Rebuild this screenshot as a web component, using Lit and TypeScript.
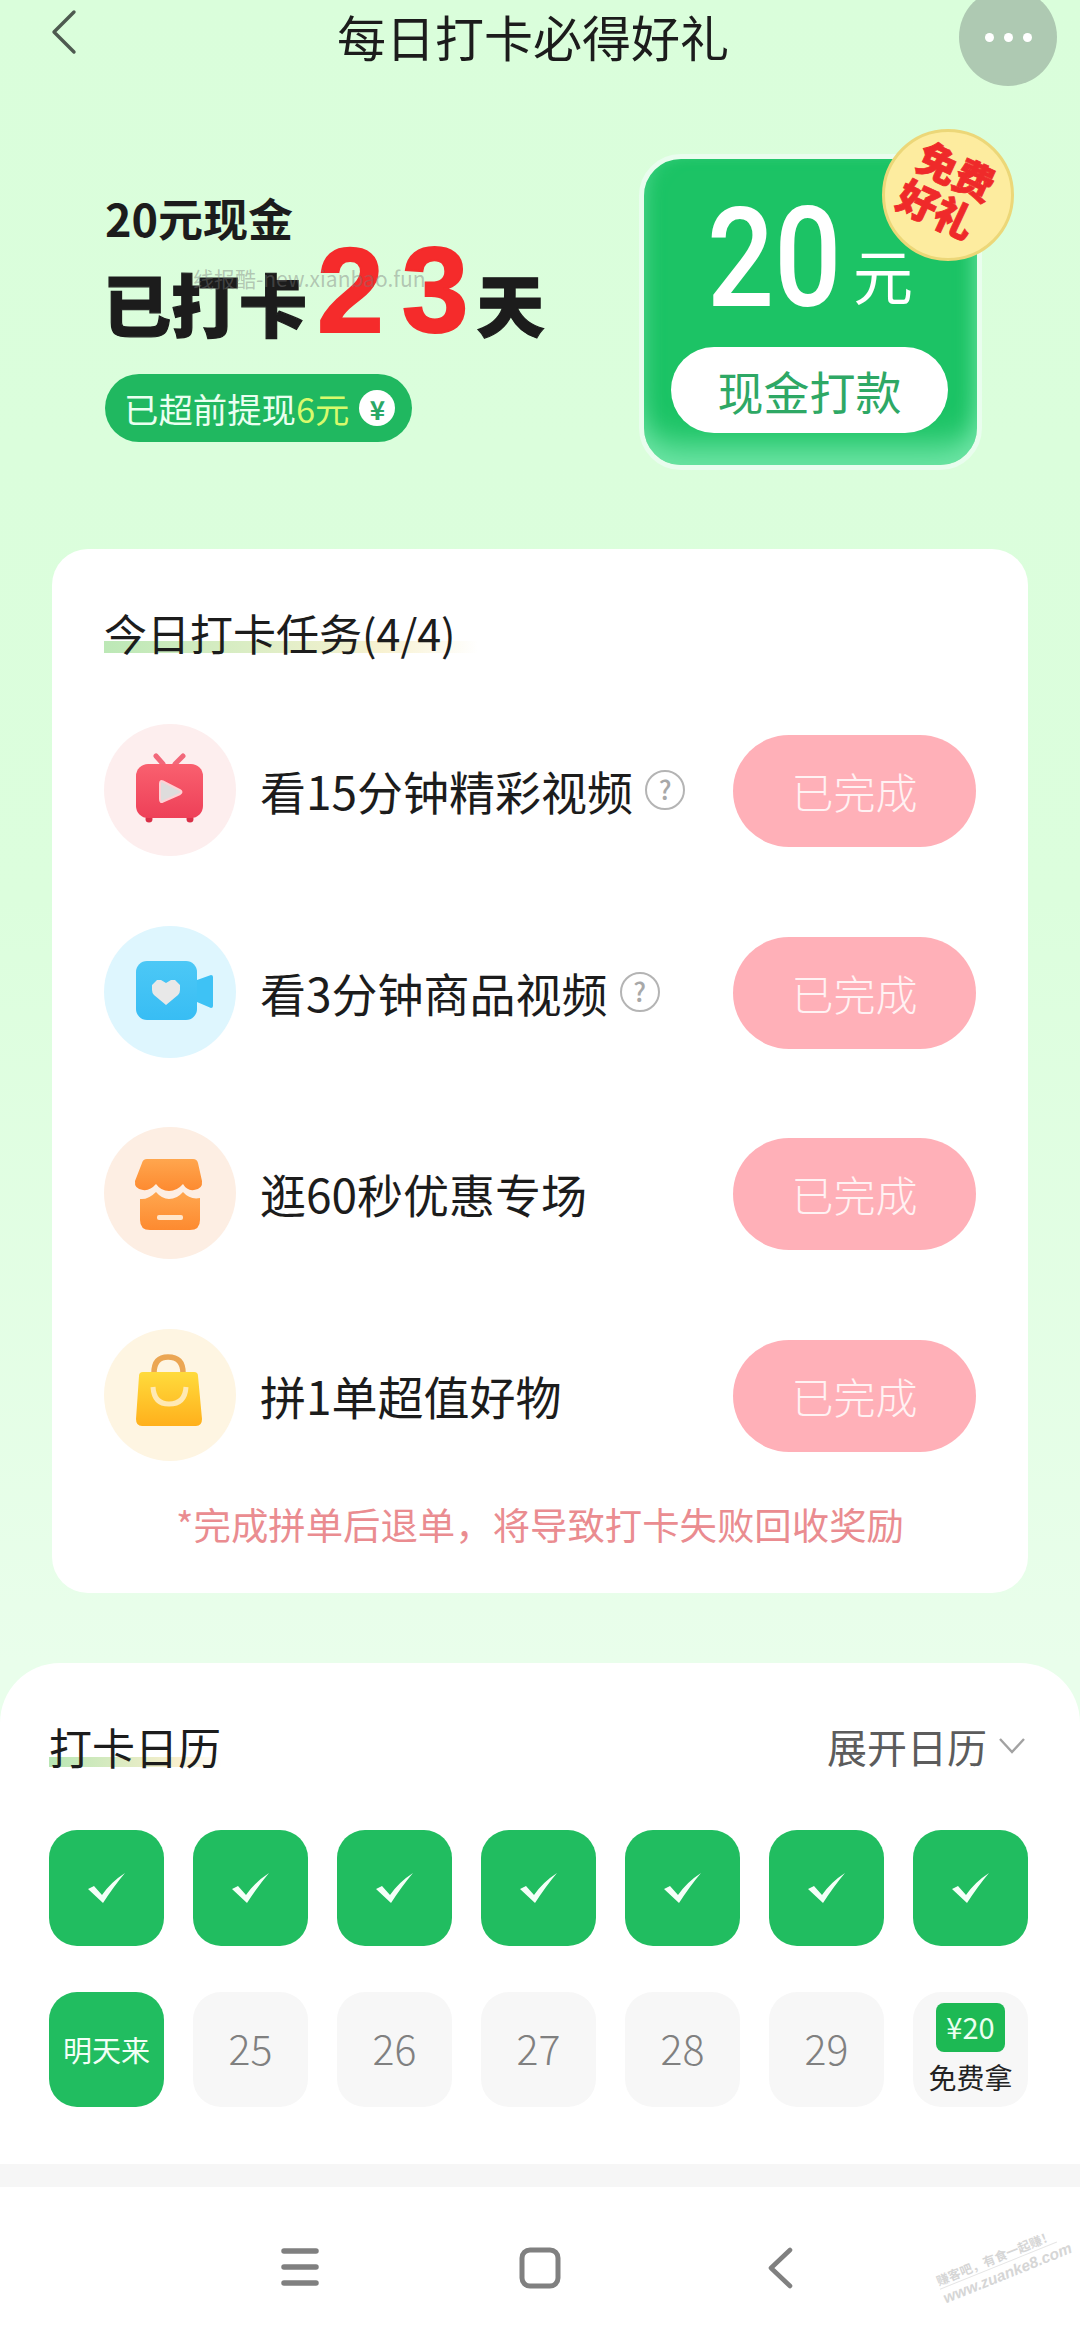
import { LitElement, css, html, svg } from "lit";
import { customElement } from "lit/decorators.js";

const tvIcon = svg`
	<defs><linearGradient id="tv" x1="0" y1="0" x2="0" y2="1"><stop offset="0" stop-color="#f9606f"/><stop offset="1" stop-color="#ee4058"/></linearGradient></defs>
	<path d="M52 32l7 8M79 32l-8 8" stroke="#f2687a" stroke-width="5" stroke-linecap="round"/>
	<circle cx="45" cy="95" r="3.5" fill="#d93048"/><circle cx="86" cy="95" r="3.5" fill="#d93048"/>
	<rect x="32" y="40" width="67" height="54" rx="12" fill="url(#tv)"/>
	<path d="M59 57.5Q56 56 56 60V75Q56 79 59 77.5L76 70Q79 68 76 66Z" fill="#dedcdc" stroke="#ffd0d4" stroke-width="2"/>`;

const cameraIcon = svg`
	<defs><linearGradient id="cam" x1="0" y1="0" x2="0" y2="1"><stop offset="0" stop-color="#4cc8f6"/><stop offset="1" stop-color="#38bdf4"/></linearGradient></defs>
	<path d="M93 54L107 49Q109 49 109 51V80Q109 82 107 82L93 76Z" fill="#3ec2f5"/>
	<rect x="32" y="35" width="61" height="59" rx="11" fill="url(#cam)"/>
	<path d="M62 79L50 69Q48 67 48 64V59L53 54H57L62 57L67 54H71L76 59V64Q76 67 74 69Z" fill="#e8e8e8"/>`;

const storeIcon = svg`
	<defs><linearGradient id="shop" x1="0" y1="0" x2="0" y2="1"><stop offset="0" stop-color="#ffa64e"/><stop offset="1" stop-color="#fd8a30"/></linearGradient></defs>
	<path d="M43 32H89Q93 32 94 36L98 54Q99 62 90 63Q83 64 79 57Q73 64 65 64Q57 64 52 57Q46 64 39 63Q30 62 31 54L38 36Q39 32 43 32Z" fill="url(#shop)"/>
	<path d="M36 72Q44 73 52 65Q58 72 65 72Q73 72 79 65Q86 73 96 71V93Q96 103 86 103H46Q36 103 36 93Z" fill="url(#shop)"/>
	<rect x="53" y="88" width="26" height="5" rx="2" fill="#ffe6cc"/>`;

const bagIcon = svg`
	<defs><linearGradient id="bag" x1="0" y1="0" x2="0" y2="1"><stop offset="0" stop-color="#ffdb3c"/><stop offset="1" stop-color="#ffb01c"/></linearGradient></defs>
	<path d="M50 44Q50 28 64 28Q79 28 79 44" fill="none" stroke="#eba653" stroke-width="5.5"/>
	<path d="M39 43H90Q94 43 94 47L98 90Q98 97 92 97H38Q32 97 32 90L35 47Q35 43 39 43Z" fill="url(#bag)"/>
	<path d="M49 58Q50 75 65 75Q81 75 82 58" fill="none" stroke="#ffe9b4" stroke-width="5"/>`;

interface Task {
	label: string;
	tint: string;
	icon: unknown;
	help?: boolean;
}

const TASKS: Task[] = [
	{ label: "看15分钟精彩视频", tint: "#fdeeee", icon: tvIcon, help: true },
	{ label: "看3分钟商品视频", tint: "#def6fe", icon: cameraIcon, help: true },
	{ label: "逛60秒优惠专场", tint: "#fdeee3", icon: storeIcon },
	{ label: "拼1单超值好物", tint: "#fef5e2", icon: bagIcon },
];

const DAYS = ["25", "26", "27", "28", "29"];

@customElement("app-root")
export class AppRoot extends LitElement {
	static styles = css`
		:host {
			display: block;
			font-family: "Noto Sans CJK SC", "Noto Sans", sans-serif;
			color: #1c1c1c;
		}

		.page {
			position: relative;
			width: 1080px;
			height: 2333px;
			overflow: hidden;
			background: linear-gradient(180deg, #dafedb 0, #dcfedd 900px, #e9feeb 1663px);
		}

		.header {
			display: grid;
			grid-template-columns: 1fr auto 1fr;
			grid-template-rows: 78px;
			align-items: center;
			height: 78px;
			padding-right: 14px;
		}

		.back {
			display: block;
			margin-left: 50px;
			margin-bottom: 14px;
		}

		.title {
			font-size: 49px;
			line-height: 72px;
			margin-bottom: 6px;
		}

		.more {
			justify-self: end;
			display: flex;
			align-items: center;
			justify-content: center;
			gap: 10px;
			width: 98px;
			height: 98px;
			margin: -4px 9px 0 0;
			border-radius: 50%;
			background: #aec9b2;
		}

		.more i {
			width: 9px;
			height: 9px;
			border-radius: 50%;
			background: #fff;
		}

		.hero {
			display: flex;
			margin-top: 76px;
			padding-left: 105px;
			height: 395px;
		}

		.hero-text {
			width: 534px;
			padding-top: 34px;
		}

		.reward {
			font-size: 45px;
			line-height: 60px;
			font-weight: 700;
		}

		.streak {
			display: flex;
			align-items: baseline;
			height: 105px;
			margin: -10px 0 0 -2px;
			font-size: 68px;
			line-height: 105px;
			font-weight: 900;
			-webkit-text-stroke: 1.2px #1c1c1c;
		}

		.count {
			margin: 0 -10px 0 10px;
			font-family: "Liberation Sans", sans-serif;
			font-size: 120px;
			font-weight: 700;
			letter-spacing: 18px;
			color: #f52b2b;
			-webkit-text-stroke: 2px #f52b2b;
		}

		.advance {
			display: inline-flex;
			align-items: center;
			box-sizing: border-box;
			width: 307px;
			height: 68px;
			margin-top: 31px;
			padding-left: 19px;
			border-radius: 34px;
			background: #20b860;
			font-size: 34.4px;
			color: #eafff0;
		}

		.advance b {
			font-weight: 400;
			color: #d8fa6c;
		}

		.yen {
			display: flex;
			align-items: center;
			justify-content: center;
			width: 36px;
			height: 36px;
			margin-left: 10px;
			border-radius: 50%;
			background: #fff;
			font-size: 26px;
			font-weight: 700;
			color: #2aa866;
		}

		.prize {
			position: relative;
			box-sizing: border-box;
			width: 343px;
			height: 316px;
			padding: 32px 0 0 27px;
			border: 5px solid #e9fdee;
			border-radius: 42px;
			background: #1cc365;
			box-shadow: inset 0 -34px 30px -14px #6ce4a4, inset -14px 0 18px -10px #52d98f, inset 14px 0 18px -12px #3dcf80;
		}

		.amount {
			display: flex;
			align-items: baseline;
			height: 140px;
			color: #fff;
			padding-left: 36px;
		}

		.amount strong {
			display: block;
			width: 146px;
			font-family: Roboto, sans-serif;
			font-size: 139px;
			line-height: 136px;
			font-weight: 500;
			transform: scaleX(0.85);
			transform-origin: left;
		}

		.amount span {
			position: relative;
			top: -6px;
			font-size: 60px;
			font-weight: 400;
			line-height: 58px;
		}

		.cash {
			width: 277px;
			height: 86px;
			margin-top: 16px;
			border-radius: 43px;
			background: #fff;
			font-size: 46px;
			line-height: 86px;
			text-align: center;
			color: #2ea865;
		}

		.badge {
			position: absolute;
			top: -30px;
			right: -37px;
			box-sizing: border-box;
			display: flex;
			flex-direction: column;
			align-items: center;
			justify-content: center;
			width: 132px;
			height: 132px;
			padding-bottom: 12px;
			border: 3px solid #ecd778;
			border-radius: 50%;
			background: #fdec9f;
			font-size: 40px;
			line-height: 44px;
			font-weight: 900;
			color: #ef2a2a;
			-webkit-text-stroke: 0.8px #ef2a2a;
		}

		.badge span {
			display: block;
			transform: rotate(25deg);
		}

		.badge span:first-child {
			margin: 0 0 -6px 18px;
		}

		.badge span:last-child {
			margin-right: 22px;
		}

		.mark {
			position: absolute;
			left: 193px;
			top: 264px;
			font-size: 21px;
			line-height: 28px;
			color: rgba(120, 120, 120, 0.42);
		}

		.tasks {
			box-sizing: border-box;
			width: 976px;
			height: 1044px;
			margin-left: 52px;
			padding: 53px 52px 0;
			border-radius: 36px;
			background: #fff;
		}

		.heading {
			display: inline-block;
			font-size: 43px;
			line-height: 60px;
			padding-right: 22px;
			background: linear-gradient(90deg, #bce8b6, #f8f2d2 75%, #fff) no-repeat left 0 bottom 9px / 100% 12px;
		}

		.rows {
			display: flex;
			flex-direction: column;
			gap: 69.5px;
			margin-top: 62px;
		}

		.row {
			display: flex;
			align-items: center;
			height: 132px;
		}

		.task-icon {
			display: block;
			flex: none;
			width: 132px;
			height: 132px;
			border-radius: 50%;
		}

		.label {
			margin-left: 24px;
			font-size: 46px;
			white-space: nowrap;
		}

		.help {
			flex: none;
			box-sizing: border-box;
			width: 40px;
			height: 40px;
			margin-left: 12px;
			border: 2.5px solid #b4b4b4;
			border-radius: 50%;
			font-size: 26px;
			line-height: 34px;
			font-weight: 500;
			text-align: center;
			color: #a8a8a8;
		}

		.done {
			flex: none;
			width: 243px;
			height: 112px;
			margin: 2px 0 0 auto;
			border-radius: 56px;
			background: #ffb0b8;
			font-size: 42px;
			line-height: 112px;
			font-weight: 300;
			text-align: center;
			color: #fff2f3;
		}

		.notice {
			margin-top: 38px;
			font-size: 37.4px;
			line-height: 50px;
			text-align: center;
			white-space: nowrap;
			color: #ea8c90;
		}

		.calendar {
			box-sizing: border-box;
			height: 501px;
			margin-top: 70px;
			padding: 53px 55px 0 49px;
			border-radius: 60px 60px 0 0;
			background: #fff;
		}

		.cal-head {
			display: flex;
			justify-content: space-between;
			align-items: flex-start;
		}

		.cal-head .heading {
			padding-right: 0;
			background-image: linear-gradient(90deg, #b8e6b4, #f8efcd 75%, #fff);
			background-size: 100% 10px;
			font-size: 43px;
		}

		.expand {
			display: flex;
			align-items: center;
			gap: 12px;
			font-size: 40px;
			line-height: 60px;
			color: #5c5c5c;
		}

		.days {
			display: grid;
			grid-template-columns: repeat(7, 115px);
			grid-template-rows: 116px 115px;
			gap: 46px 29px;
			margin-top: 54px;
		}

		.day {
			display: flex;
			align-items: center;
			justify-content: center;
			box-sizing: border-box;
			padding-bottom: 5px;
			border-radius: 28px;
			background: #f7f7f7;
			font-size: 41px;
			font-weight: 300;
			color: #808080;
		}

		.day.on {
			padding-bottom: 0;
			background: #21bd60;
			color: #f2fff6;
		}

		.day.next {
			padding-bottom: 2px;
			font-size: 29px;
			font-weight: 400;
		}

		.day.gift {
			flex-direction: column;
			justify-content: flex-start;
			padding: 11px 0 0;
			font-size: 28px;
			font-weight: 400;
			line-height: 40px;
			color: #222;
		}

		.tag {
			width: 69px;
			height: 49px;
			margin-bottom: 5px;
			border-radius: 8px;
			background: #1db954;
			font-size: 29px;
			line-height: 47px;
			text-align: center;
			color: #eafff0;
		}

		.band {
			height: 23px;
			background: #f6f6f6;
		}

		.nav {
			position: relative;
			display: grid;
			grid-template-columns: repeat(3, 240px);
			justify-items: center;
			height: 146px;
			padding: 60px 0 0 180px;
			box-sizing: border-box;
			background: #fff;
		}

		.stamp {
			position: absolute;
			left: 936px;
			top: 62px;
			width: 126px;
			transform: rotate(-22deg);
			color: #d6d6d6;
			white-space: nowrap;
		}

		.stamp div:first-child {
			font-size: 12.5px;
			line-height: 16px;
			font-weight: 700;
			border-bottom: 1px solid #e6e6e6;
		}

		.stamp div:last-child {
			font-family: "Liberation Sans", sans-serif;
			font-size: 15.5px;
			line-height: 19px;
			font-style: italic;
			font-weight: 700;
		}
	`;

	renderTask(task: Task) {
		return html`
			<div class="row">
				<svg class="task-icon" style="background:${task.tint}" viewBox="0 0 132 132">${task.icon}</svg>
				<div class="label">${task.label}</div>
				${task.help ? html`<div class="help">?</div>` : ""}
				<div class="done">已完成</div>
			</div>
		`;
	}

	render() {
		return html`
			<div class="page">
				<div class="header">
					<svg class="back" width="28" height="46" viewBox="0 0 28 46">
						<path d="M24 3L4 23l20 20" fill="none" stroke="#4e5a50" stroke-width="3.4" stroke-linecap="round" stroke-linejoin="round"/>
					</svg>
					<div class="title">每日打卡必得好礼</div>
					<div class="more"><i></i><i></i><i></i></div>
				</div>

				<div class="hero">
					<div class="hero-text">
						<div class="reward">20元现金</div>
						<div class="streak">已打卡<span class="count">23</span>天</div>
						<div class="advance">已超前提现<b>6元</b><span class="yen">¥</span></div>
					</div>
					<div class="prize">
						<div class="amount"><strong>20</strong><span>元</span></div>
						<div class="cash">现金打款</div>
						<div class="badge"><span>免费</span><span>好礼</span></div>
					</div>
				</div>
				<div class="mark">线报酷-new.xianbao.fun</div>

				<div class="tasks">
					<div class="heading">今日打卡任务(4/4)</div>
					<div class="rows">${TASKS.map((task) => this.renderTask(task))}</div>
					<div class="notice">*完成拼单后退单，将导致打卡失败回收奖励</div>
				</div>

				<div class="calendar">
					<div class="cal-head">
						<div class="heading">打卡日历</div>
						<div class="expand">
							展开日历
							<svg width="26" height="16" viewBox="0 0 26 16">
								<path d="M1 1l12 13L25 1" fill="none" stroke="#a2a2a2" stroke-width="2.4"/>
							</svg>
						</div>
					</div>
					<div class="days">
						${Array.from({ length: 7 }, () => html`
							<div class="day on">
								<svg width="40" height="32" viewBox="0 0 40 32"><path d="M1 17L7 14L15 23Q24 10 38 1Q27 14 16 31Z" fill="#f4fff8"/></svg>
							</div>
						`)}
						<div class="day on next">明天来</div>
						${DAYS.map((day) => html`<div class="day">${day}</div>`)}
						<div class="day gift"><div class="tag">¥20</div>免费拿</div>
					</div>
				</div>

				<div class="band"></div>
				<div class="nav">
					<svg width="38" height="40" viewBox="0 0 38 40">
						<path d="M3 4h32M3 20h32M3 36h32" stroke="#808080" stroke-width="5.5" stroke-linecap="round"/>
					</svg>
					<svg width="42" height="42" viewBox="0 0 42 42">
						<rect x="3" y="3" width="36" height="36" rx="8" fill="none" stroke="#808080" stroke-width="5"/>
					</svg>
					<svg width="28" height="42" viewBox="0 0 28 42">
						<path d="M24 3L5 21l19 18" fill="none" stroke="#808080" stroke-width="4.6" stroke-linecap="round" stroke-linejoin="round"/>
					</svg>
					<div class="stamp"><div>赚客吧，有食一起赚！</div><div>www.zuanke8.com</div></div>
				</div>
			</div>
		`;
	}
}
